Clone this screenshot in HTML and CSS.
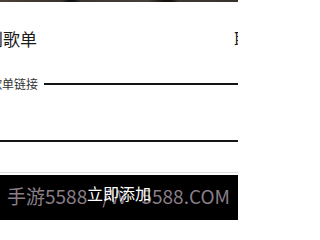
FILE: index.html
```html
<!DOCTYPE html>
<html lang="zh">
<head>
<meta charset="utf-8">
<link rel="stylesheet" href="styles.css">
</head>
<body>
<div class="page">
  <div class="strip"></div>
  <div class="sheet">
    <header class="head">
      <h1 class="title">添加到歌单</h1>
      <span class="action">取消</span>
    </header>
    <fieldset class="field">
      <legend class="legend">歌单链接</legend>
      <textarea class="input" aria-label="歌单链接"></textarea>
    </fieldset>
  </div>
  <div class="footer">
    <button class="submit"><span class="submit-label">立即添加</span></button>
    <div class="watermark"><span>手游5588</span><span>/W</span><span>5588.COM</span></div>
  </div>
</div>
</body>
</html>
```
FILE: styles.css
```css
html, body {
  margin: 0;
  padding: 0;
  background: #fff;
}
body {
  font-family: "Noto Sans CJK SC", "Noto Sans", sans-serif;
}
.page {
  position: relative;
  width: 238px;
  height: 220px;
  overflow: hidden;
}
.strip {
  height: 2px;
  background: linear-gradient(90deg, #4a4038 0, #3a332d 26%, #111 29%, #111 31%, #3c3630 34%, #45403a 62%, #151210 69%, #151210 72%, #3d3832 75%, #38322c 100%);
}
.head {
  display: flex;
  justify-content: space-between;
  align-items: flex-start;
  padding-top: 25px;
}
.title {
  margin: 0 0 0 -48px;
  flex-shrink: 0;
  font-size: 17px;
  font-weight: 400;
  line-height: 23px;
  color: #1a1a1a;
  white-space: nowrap;
}
.action {
  flex-shrink: 0;
  margin-right: -30px;
  font-size: 17px;
  line-height: 23px;
  color: #1a1a1a;
  white-space: nowrap;
}
.field {
  margin: 26px -20px 0 -14px;
  padding: 0;
  min-width: 0;
  border: 2px solid #141414;
}
.legend {
  padding: 0 6px 0 2px;
  font-size: 12px;
  line-height: 16px;
  color: #333;
}
.input {
  display: block;
  width: 100%;
  height: 48px;
  padding: 0;
  border: 0;
  resize: none;
  outline: none;
  background: transparent;
}
.footer {
  position: relative;
  margin-top: 30px;
  border-top: 1px solid #dcdcdc;
  padding-top: 2px;
}
.submit {
  display: block;
  width: 100%;
  margin: 0;
  padding: 7px 0 19px;
  border: 0;
  background: #000;
  color: #fff;
  font-family: "Noto Sans CJK SC", sans-serif;
  font-size: 16px;
  line-height: 22px;
  text-align: center;
}
.submit-label {
  position: relative;
  z-index: 2;
}
.watermark {
  position: absolute;
  left: 7px;
  right: 8px;
  top: 13px;
  z-index: 1;
  display: flex;
  justify-content: space-between;
  font-size: 19px;
  line-height: 19px;
  color: #8a7e88;
  white-space: nowrap;
  pointer-events: none;
}
```
